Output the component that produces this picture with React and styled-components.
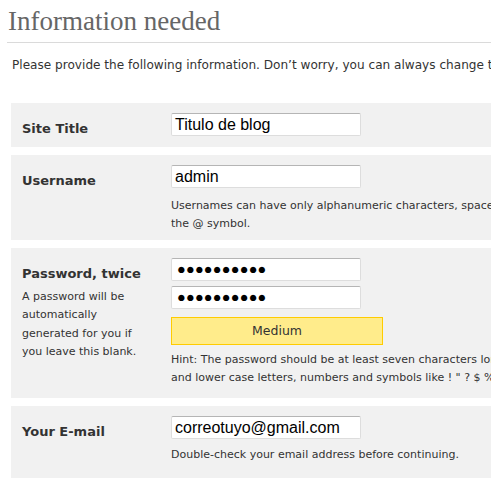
import React from "react";
import styled, { createGlobalStyle } from "styled-components";

const Global = createGlobalStyle`
  html, body { margin: 0; padding: 0; background: #fff; overflow: hidden; }
  body { font-family: "DejaVu Sans", Verdana, sans-serif; color: #333; }
`;

const Page = styled.div`
  width: 760px;
  padding: 0 0 0 7px;
`;

const Heading = styled.h1`
  margin: 0;
  padding: 7px 0 7px 1px;
  font-family: Georgia, "Liberation Serif", serif;
  font-weight: normal;
  font-size: 27px;
  line-height: 28px;
  color: #666;
  border-bottom: 1px solid #dadada;
`;

const Intro = styled.p`
  margin: 0;
  padding: 14px 0 0 5px;
  font-size: 12.1px;
  line-height: 16px;
  color: #333;
  white-space: nowrap;
`;

const Form = styled.div`
  display: flex;
  flex-direction: column;
  gap: 8px;
  margin: 30px 0 0 4px;
`;

const Row = styled.div`
  display: grid;
  grid-template-columns: 149px 1fr;
  background: #f1f1f1;
  padding: 10px 0 ${(p) => p.$pb || 10}px 11px;
`;

const Label = styled.div`
  padding-top: 8px;
  font-size: 13px;
  line-height: 16px;
  font-weight: bold;
  color: #333;
`;

const LabelNote = styled.div`
  margin-top: 6px;
  font-size: 11px;
  line-height: 18.4px;
  font-weight: normal;
  color: #333;
  width: 130px;
`;

const Field = styled.div`
  display: flex;
  flex-direction: column;
  align-items: flex-start;
`;

const Input = styled.div`
  box-sizing: border-box;
  width: 190px;
  height: 23px;
  padding: 0 0 0 3px;
  background: #fff;
  border: 1px solid #ddd;
  border-top-color: #b5b5b5;
  border-radius: 2px;
  font-family: "Liberation Sans", Arial, sans-serif;
  font-size: 16px;
  line-height: 21px;
  color: #000;
  white-space: nowrap;
  overflow: hidden;
  & + & { margin-top: 5px; }
`;

const Dots = styled.span`
  font-size: 14.5px;
  letter-spacing: 0.2px;
  position: relative;
  top: -1px;
  padding-left: 2px;
`;

const Meter = styled.div`
  box-sizing: border-box;
  margin-top: 8px;
  width: 212px;
  height: 28px;
  background: #ffec8b;
  border: 1px solid #ffcc00;
  font-size: 12.5px;
  line-height: 26px;
  text-align: center;
  color: #333;
`;

const Note = styled.div`
  margin-top: ${(p) => p.$mt || 7}px;
  font-size: 11px;
  line-height: 18px;
  color: #333;
  white-space: nowrap;
`;

const dots = "\u25CF".repeat(10);

export default function App() {
  return (
    <>
      <Global />
      <Page>
        <Heading>Information needed</Heading>
        <Intro>
          Please provide the following information. Don’t worry, you can always change these settings later.
        </Intro>
        <Form>
          <Row>
            <Label>Site Title</Label>
            <Field>
              <Input>Titulo de blog</Input>
            </Field>
          </Row>
          <Row $pb={7}>
            <Label>Username</Label>
            <Field>
              <Input>admin</Input>
              <Note $mt={9}>
                Usernames can have only alphanumeric characters, spaces, underscores, hyphens, periods and
                <br />
                the @ symbol.
              </Note>
            </Field>
          </Row>
          <Row $pb={11}>
            <Label>
              Password, twice
              <LabelNote>
                A password will be automatically generated for you if you leave this blank.
              </LabelNote>
            </Label>
            <Field>
              <Input><Dots>{dots}</Dots></Input>
              <Input><Dots>{dots}</Dots></Input>
              <Meter>Medium</Meter>
              <Note $mt={6}>
                Hint: The password should be at least seven characters long. To make it stronger, use upper
                <br />
                and lower case letters, numbers and symbols like ! " ? $ % ^ &amp; ).
              </Note>
            </Field>
          </Row>
          <Row $pb={30}>
            <Label>Your E-mail</Label>
            <Field>
              <Input>correotuyo@gmail.com</Input>
              <Note $mt={7}>Double-check your email address before continuing.</Note>
            </Field>
          </Row>
        </Form>
      </Page>
    </>
  );
}
